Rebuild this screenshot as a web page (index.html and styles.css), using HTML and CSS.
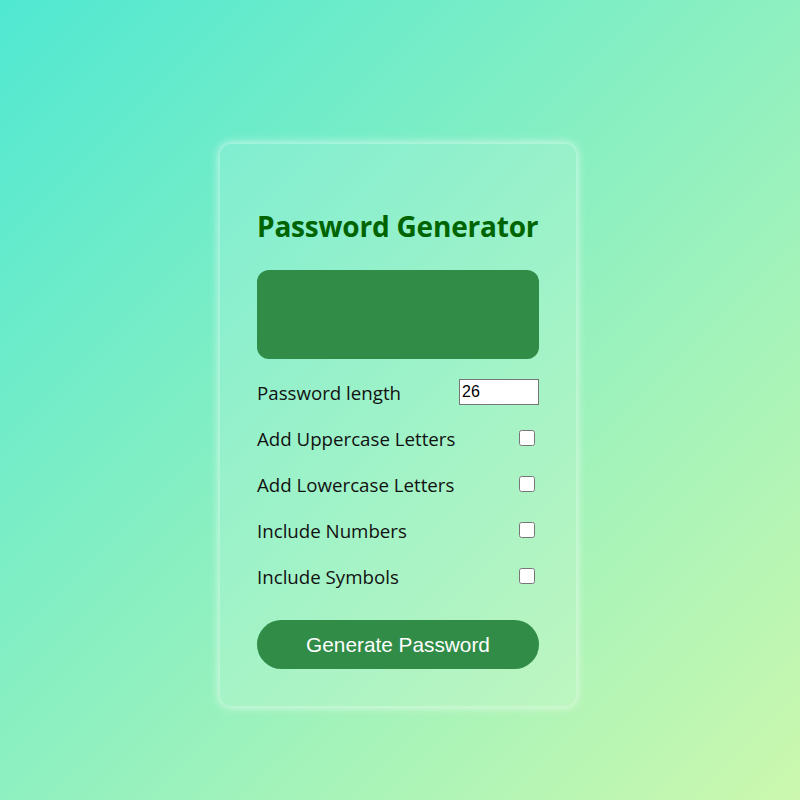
FILE: index.html
```html
<!DOCTYPE html>
<html>
<head>
<meta charset="utf-8">
<link rel="stylesheet" href="styles.css">
</head>
<body>
<div class="page">
  <div class="card">
    <h1 class="title">Password Generator</h1>
    <div class="output"></div>
    <div class="row">
      <label class="label" for="len">Password length</label>
      <input class="num" id="len" type="number" value="26">
    </div>
    <div class="row">
      <label class="label" for="up">Add Uppercase Letters</label>
      <input class="check" id="up" type="checkbox">
    </div>
    <div class="row">
      <label class="label" for="low">Add Lowercase Letters</label>
      <input class="check" id="low" type="checkbox">
    </div>
    <div class="row">
      <label class="label" for="num">Include Numbers</label>
      <input class="check" id="num" type="checkbox">
    </div>
    <div class="row">
      <label class="label" for="sym">Include Symbols</label>
      <input class="check" id="sym" type="checkbox">
    </div>
    <button class="btn">Generate Password</button>
  </div>
</div>
</body>
</html>
```
FILE: styles.css
```css
html, body {
  margin: 0;
  padding: 0;
}
body {
  width: 800px;
  height: 800px;
  background: linear-gradient(135deg, #50e8d2 0%, #8ef0c0 50%, #ccf8ae 100%);
  font-family: "Open Sans", "Noto Sans", sans-serif;
}
.page {
  display: flex;
  justify-content: flex-start;
  padding-top: 143px;
  padding-left: 219px;
}
.card {
  width: 282px;
  padding: 38px 37px 37px;
  border-radius: 12px;
  background: rgba(255, 255, 255, 0.14);
  box-shadow: 0 0 10px rgba(255, 255, 255, 0.7);
  border: 1px solid rgba(255, 255, 255, 0.25);
  display: flex;
  flex-direction: column;
}
.title {
  flex-shrink: 0;
  margin: 26px 0 26px;
  font-size: 28px;
  line-height: 36px;
  font-weight: 700;
  color: #006400;
  letter-spacing: -0.2px;
}
.output {
  flex-shrink: 0;
  height: 89px;
  border-radius: 12px;
  background: #318c47;
  margin-bottom: 10px;
}
.row {
  flex-shrink: 0;
  height: 46px;
  display: flex;
  align-items: center;
  justify-content: space-between;
}
.label {
  font-size: 18.7px;
  color: #111;
}
.num {
  width: 80px;
  height: 26px;
  box-sizing: border-box;
  font-family: "Liberation Sans", Arial, sans-serif;
  font-size: 16px;
  padding: 1px 2px;
  border: 1px solid #767676;
  margin: 0;
}
.check {
  width: 16px;
  height: 16px;
  margin: 0 4px 0 0;
}
.btn {
  flex-shrink: 0;
  margin-top: 21px;
  height: 49px;
  border: none;
  border-radius: 25px;
  background: #318c47;
  color: #fff;
  font-family: "Liberation Sans", Arial, sans-serif;
  font-size: 20.8px;
}
```
